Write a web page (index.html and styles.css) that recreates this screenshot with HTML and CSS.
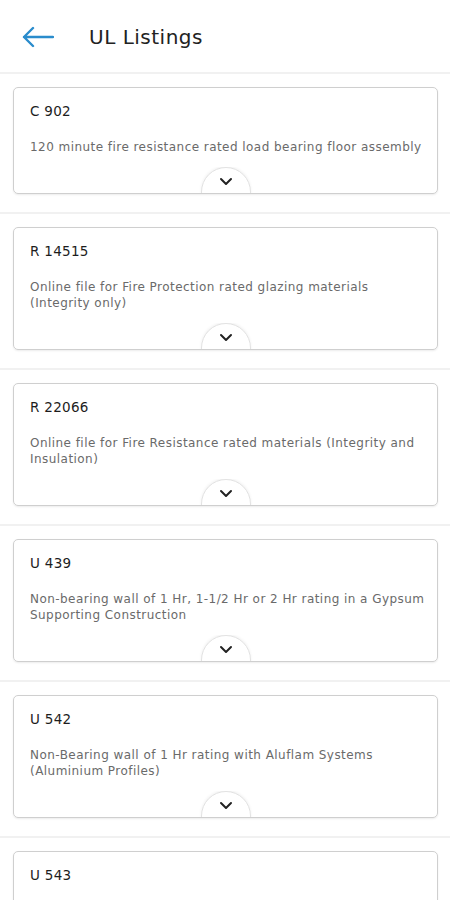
FILE: index.html
```html
<!DOCTYPE html>
<html>
<head>
<meta charset="utf-8">
<link rel="stylesheet" href="styles.css">
</head>
<body>
<header class="appbar">
  <button class="back" aria-label="Back">
    <svg width="32" height="22" viewBox="0 0 32 22"><path d="M2 11 H31 M11 2 L2 11 L11 20" fill="none" stroke="#2a8ccc" stroke-width="2.4" stroke-linecap="round" stroke-linejoin="round"/></svg>
  </button>
  <h1 class="title">UL Listings</h1>
</header>
<main class="list">
  <section class="item">
    <div class="card">
      <div class="code">C 902</div>
      <p class="desc">120 minute fire resistance rated load bearing floor assembly</p>
      <div class="toggle"><span class="bubble"><svg width="14" height="9" viewBox="0 0 14 9"><path d="M2 2 L7 7 L12 2" fill="none" stroke="#222" stroke-width="2" stroke-linecap="round" stroke-linejoin="round"/></svg></span></div>
    </div>
  </section>
  <section class="item">
    <div class="card">
      <div class="code">R 14515</div>
      <p class="desc">Online file for Fire Protection rated glazing materials (Integrity only)</p>
      <div class="toggle"><span class="bubble"><svg width="14" height="9" viewBox="0 0 14 9"><path d="M2 2 L7 7 L12 2" fill="none" stroke="#222" stroke-width="2" stroke-linecap="round" stroke-linejoin="round"/></svg></span></div>
    </div>
  </section>
  <section class="item">
    <div class="card">
      <div class="code">R 22066</div>
      <p class="desc">Online file for Fire Resistance rated materials (Integrity and Insulation)</p>
      <div class="toggle"><span class="bubble"><svg width="14" height="9" viewBox="0 0 14 9"><path d="M2 2 L7 7 L12 2" fill="none" stroke="#222" stroke-width="2" stroke-linecap="round" stroke-linejoin="round"/></svg></span></div>
    </div>
  </section>
  <section class="item">
    <div class="card">
      <div class="code">U 439</div>
      <p class="desc">Non-bearing wall of 1 Hr, 1-1/2 Hr or 2 Hr rating in a Gypsum Supporting Construction</p>
      <div class="toggle"><span class="bubble"><svg width="14" height="9" viewBox="0 0 14 9"><path d="M2 2 L7 7 L12 2" fill="none" stroke="#222" stroke-width="2" stroke-linecap="round" stroke-linejoin="round"/></svg></span></div>
    </div>
  </section>
  <section class="item">
    <div class="card">
      <div class="code">U 542</div>
      <p class="desc">Non-Bearing wall of 1 Hr rating with Aluflam Systems (Aluminium Profiles)</p>
      <div class="toggle"><span class="bubble"><svg width="14" height="9" viewBox="0 0 14 9"><path d="M2 2 L7 7 L12 2" fill="none" stroke="#222" stroke-width="2" stroke-linecap="round" stroke-linejoin="round"/></svg></span></div>
    </div>
  </section>
  <section class="item">
    <div class="card">
      <div class="code">U 543</div>
      <p class="desc">Non-Bearing wall of 2 Hr rating with Aluflam Systems (Aluminium Profiles)</p>
      <div class="toggle"><span class="bubble"><svg width="14" height="9" viewBox="0 0 14 9"><path d="M2 2 L7 7 L12 2" fill="none" stroke="#222" stroke-width="2" stroke-linecap="round" stroke-linejoin="round"/></svg></span></div>
    </div>
  </section>
</main>
</body>
</html>
```
FILE: styles.css
```css
* { box-sizing: border-box; }
html, body { margin: 0; padding: 0; background: #fff; }
body {
  font-family: "DejaVu Sans", "Open Sans", sans-serif;
  color: #222;
  width: 450px;
  height: 900px;
  overflow: hidden;
}
.appbar {
  height: 74px;
  display: flex;
  align-items: center;
  padding: 2px 0 0 22px;
  border-bottom: 2px solid #f1f1f1;
}
.back {
  border: 0;
  background: none;
  padding: 0;
  width: 34px;
  height: 24px;
  display: flex;
  align-items: center;
}
.title {
  margin: 0 0 0 33px;
  font-size: 20px;
  font-weight: 500;
  letter-spacing: 0.5px;
  color: #222;
}
.list { display: flex; flex-direction: column; }
.item {
  padding: 13px 12px 18px 13px;
  border-bottom: 2px solid #f1f1f1;
}
.card {
  border: 1px solid #cfcfcf;
  border-radius: 5px;
  box-shadow: 0 1px 2px rgba(0,0,0,0.08);
  padding: 14px 10px 0 16px;
  overflow: hidden;
}
.code {
  font-size: 13.5px;
  line-height: 18px;
  letter-spacing: 0.3px;
  color: #1d1d1d;
}
.desc {
  margin: 19px 0 0;
  font-size: 12px;
  line-height: 16px;
  letter-spacing: 0.45px;
  color: #6a6a6a;
}
.toggle {
  margin-top: 12px;
  height: 26px;
  display: flex;
  justify-content: center;
  padding-right: 6px;
  overflow: hidden;
}
.bubble {
  width: 50px;
  height: 50px;
  flex: none;
  border-radius: 50%;
  border: 1px solid #e2e2e2;
  box-shadow: 0 -1px 3px rgba(0,0,0,0.06);
  background: #fff;
  display: flex;
  justify-content: center;
  padding-top: 9px;
}
.bubble svg { display: block; }
```
